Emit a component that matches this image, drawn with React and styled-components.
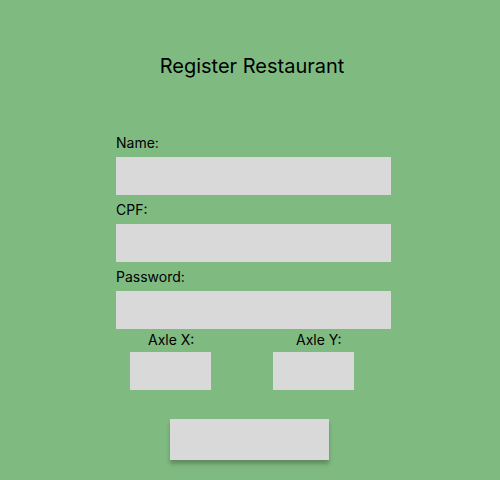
import React, { useState } from 'react'
import styled, { createGlobalStyle } from 'styled-components'

const GlobalStyle = createGlobalStyle`
  body {
    margin: 0;
    background: #7fbb80;
    font-family: Inter, "Liberation Sans", sans-serif;
    color: #000;
  }
`

function App() {
  const [name, setName] = useState('')
  const [cpf, setCpf] = useState('')
  const [password, setPassword] = useState('')
  const [axleX, setAxleX] = useState('')
  const [axleY, setAxleY] = useState('')

  return (
    <Page>
      <GlobalStyle />
      <Title>Register Restaurant</Title>
      <Form onSubmit={(e) => e.preventDefault()}>
        <Field>
          Name:
          <Input value={name} type='text' onChange={(e) => setName(e.target.value)} />
        </Field>
        <Field>
          CPF:
          <Input value={cpf} type='text' onChange={(e) => setCpf(e.target.value)} />
        </Field>
        <Field>
          Password:
          <Input value={password} type='password' onChange={(e) => setPassword(e.target.value)} />
        </Field>
        <AxleRow>
          <AxleField>
            <AxleLabel shift={18}>Axle X:</AxleLabel>
            <SmallInput value={axleX} type='text' onChange={(e) => setAxleX(e.target.value)} />
          </AxleField>
          <AxleField>
            <AxleLabel shift={23}>Axle Y:</AxleLabel>
            <SmallInput value={axleY} type='text' onChange={(e) => setAxleY(e.target.value)} />
          </AxleField>
        </AxleRow>
        <Submit type='submit' />
      </Form>
    </Page>
  )
}

export default App

const Page = styled.div`
  width: 500px;
  height: 480px;
  display: flex;
  flex-direction: column;
  padding-top: 54px;
  box-sizing: border-box;
`

const Title = styled.h1`
  margin: 0;
  font-size: 20px;
  font-weight: 400;
  line-height: 24px;
  text-align: center;
  padding-left: 4px;
`

const Form = styled.form`
  display: flex;
  flex-direction: column;
  width: 275px;
  margin: 55px 0 0 116px;
`

const Field = styled.label`
  display: flex;
  flex-direction: column;
  gap: 5px;
  margin-bottom: 5px;
  font-size: 14px;
  line-height: 19px;
`

const Input = styled.input`
  width: 275px;
  height: 38px;
  border: none;
  background: #d9d9d9;
  box-sizing: border-box;
  padding: 0 10px;
  font: inherit;
  outline: none;
`

const AxleRow = styled.div`
  display: flex;
  gap: 62px;
  padding-left: 14px;
  margin-top: -4px;
`

const AxleField = styled.label`
  display: flex;
  flex-direction: column;
  gap: 3px;
  font-size: 14px;
  line-height: 19px;
`

const AxleLabel = styled.span`
  padding-left: ${(p) => p.shift}px;
`

const SmallInput = styled(Input)`
  width: 81px;
`

const Submit = styled.button`
  align-self: flex-start;
  margin: 29px 0 0 54px;
  width: 159px;
  height: 41px;
  border: none;
  background: #d9d9d9;
  box-shadow: 0 4px 4px rgba(0, 0, 0, 0.25);
  cursor: pointer;
`
